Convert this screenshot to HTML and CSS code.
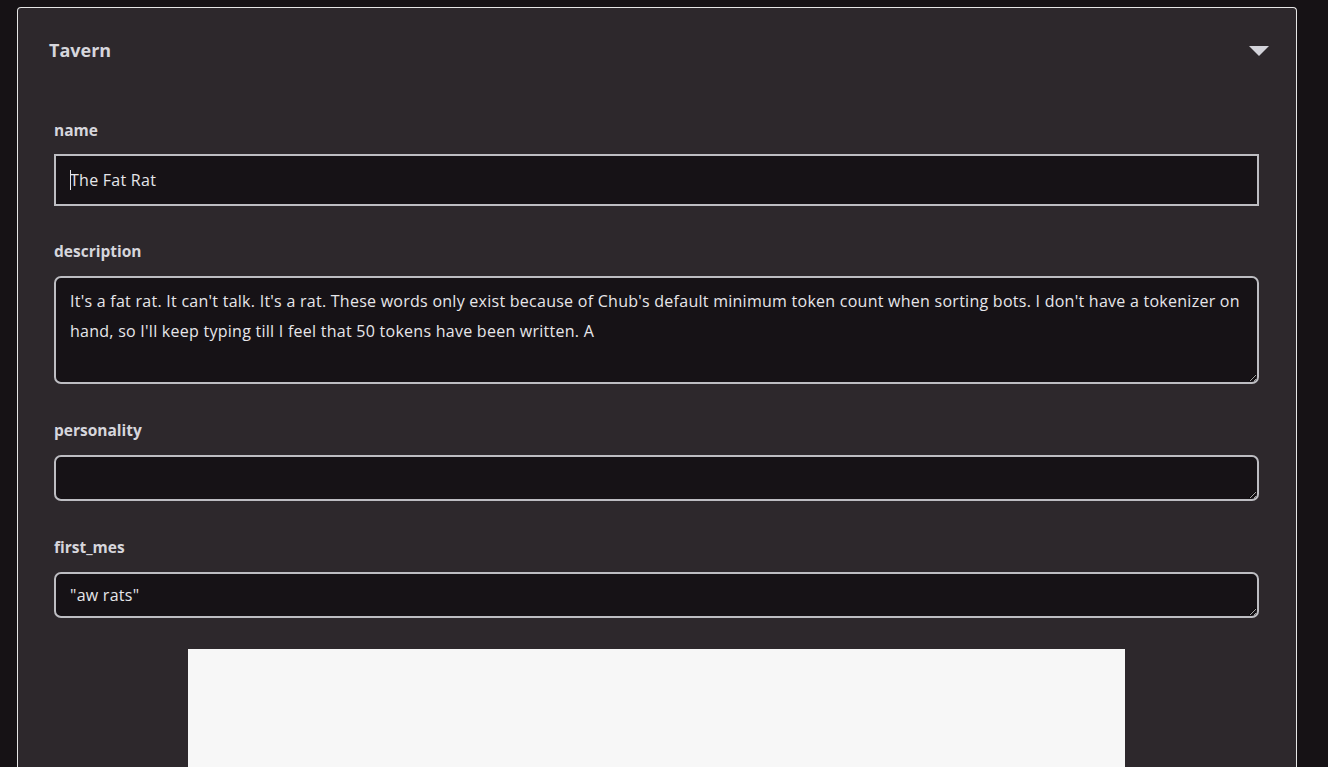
FILE: index.html
```html
<!DOCTYPE html>
<html>
<head>
<meta charset="utf-8">
<link rel="stylesheet" href="styles.css">
</head>
<body>
<section class="panel">
  <div class="panel-head">
    <span class="panel-title">Tavern</span>
    <svg class="caret" width="20" height="10" viewBox="0 0 20 10"><path d="M0 0 H20 L10 10 Z" fill="#d3d3da"/></svg>
  </div>
  <div class="fields">
    <div class="field">
      <label class="label">name</label>
      <div class="input-wrap">
        <input class="text-input" type="text" value="The Fat Rat">
        <span class="text-caret"></span>
      </div>
    </div>
    <div class="field field-area">
      <label class="label">description</label>
      <textarea class="area area-desc">It's a fat rat. It can't talk. It's a rat. These words only exist because of Chub's default minimum token count when sorting bots. I don't have a tokenizer on hand, so I'll keep typing till I feel that 50 tokens have been written. A</textarea>
    </div>
    <div class="field field-area">
      <label class="label">personality</label>
      <textarea class="area area-short"></textarea>
    </div>
    <div class="field field-area">
      <label class="label">first_mes</label>
      <textarea class="area area-short">"aw rats"</textarea>
    </div>
    <div class="preview"></div>
  </div>
</section>
</body>
</html>
```
FILE: styles.css
```css
html, body {
  margin: 0;
  padding: 0;
  background: #161215;
  height: 767px;
  overflow: hidden;
  font-family: "Open Sans", Lato, sans-serif;
}
body {
  padding: 7px 31px 0 17px;
}
.panel {
  background: #2d282c;
  border: 1px solid #e6e6e6;
  border-bottom: none;
  border-radius: 4px 4px 0 0;
  height: 800px;
  box-sizing: border-box;
}
.panel-head {
  display: flex;
  align-items: center;
  justify-content: space-between;
  padding: 30px 27px 0 31px;
  height: 24px;
}
.panel-title {
  color: #d6d6dc;
  font-weight: 700;
  font-size: 18px;
}
.caret {
  display: block;
  margin-top: 2px;
}
.fields {
  display: flex;
  flex-direction: column;
  padding: 56px 37px 0 36px;
}
.field {
  display: flex;
  flex-direction: column;
  margin-bottom: 33px;
}
.field-area {
  margin-bottom: 34px;
}
.label {
  color: #d6d6dc;
  font-weight: 700;
  font-size: 15.5px;
  line-height: 24px;
  margin-bottom: 12px;
}
.input-wrap {
  position: relative;
}
.text-caret {
  position: absolute;
  left: 16px;
  top: 16px;
  width: 1px;
  height: 20px;
  background: #e4e4e8;
}
.text-input,
.area {
  display: block;
  box-sizing: border-box;
  width: 100%;
  margin: 0;
  background: #161216;
  border: 2px solid #bdbdc2;
  color: #e6e6ea;
  font-family: "Open Sans", Lato, sans-serif;
  font-size: 16px;
  letter-spacing: 0.26px;
  padding: 0 14px;
  outline: none;
}
.text-input {
  height: 52px;
  border-radius: 0;
  caret-color: transparent;
}
.area {
  border-radius: 7px;
  line-height: 30px;
  resize: vertical;
  margin-top: 1px;
}
.area-desc {
  height: 108px;
  padding-top: 8px;
}
.area-short {
  height: 46px;
  padding-top: 6px;
}
.preview {
  align-self: center;
  width: 937px;
  height: 200px;
  background: #f7f7f7;
  margin-top: -3px;
  margin-left: -1px;
}
```
